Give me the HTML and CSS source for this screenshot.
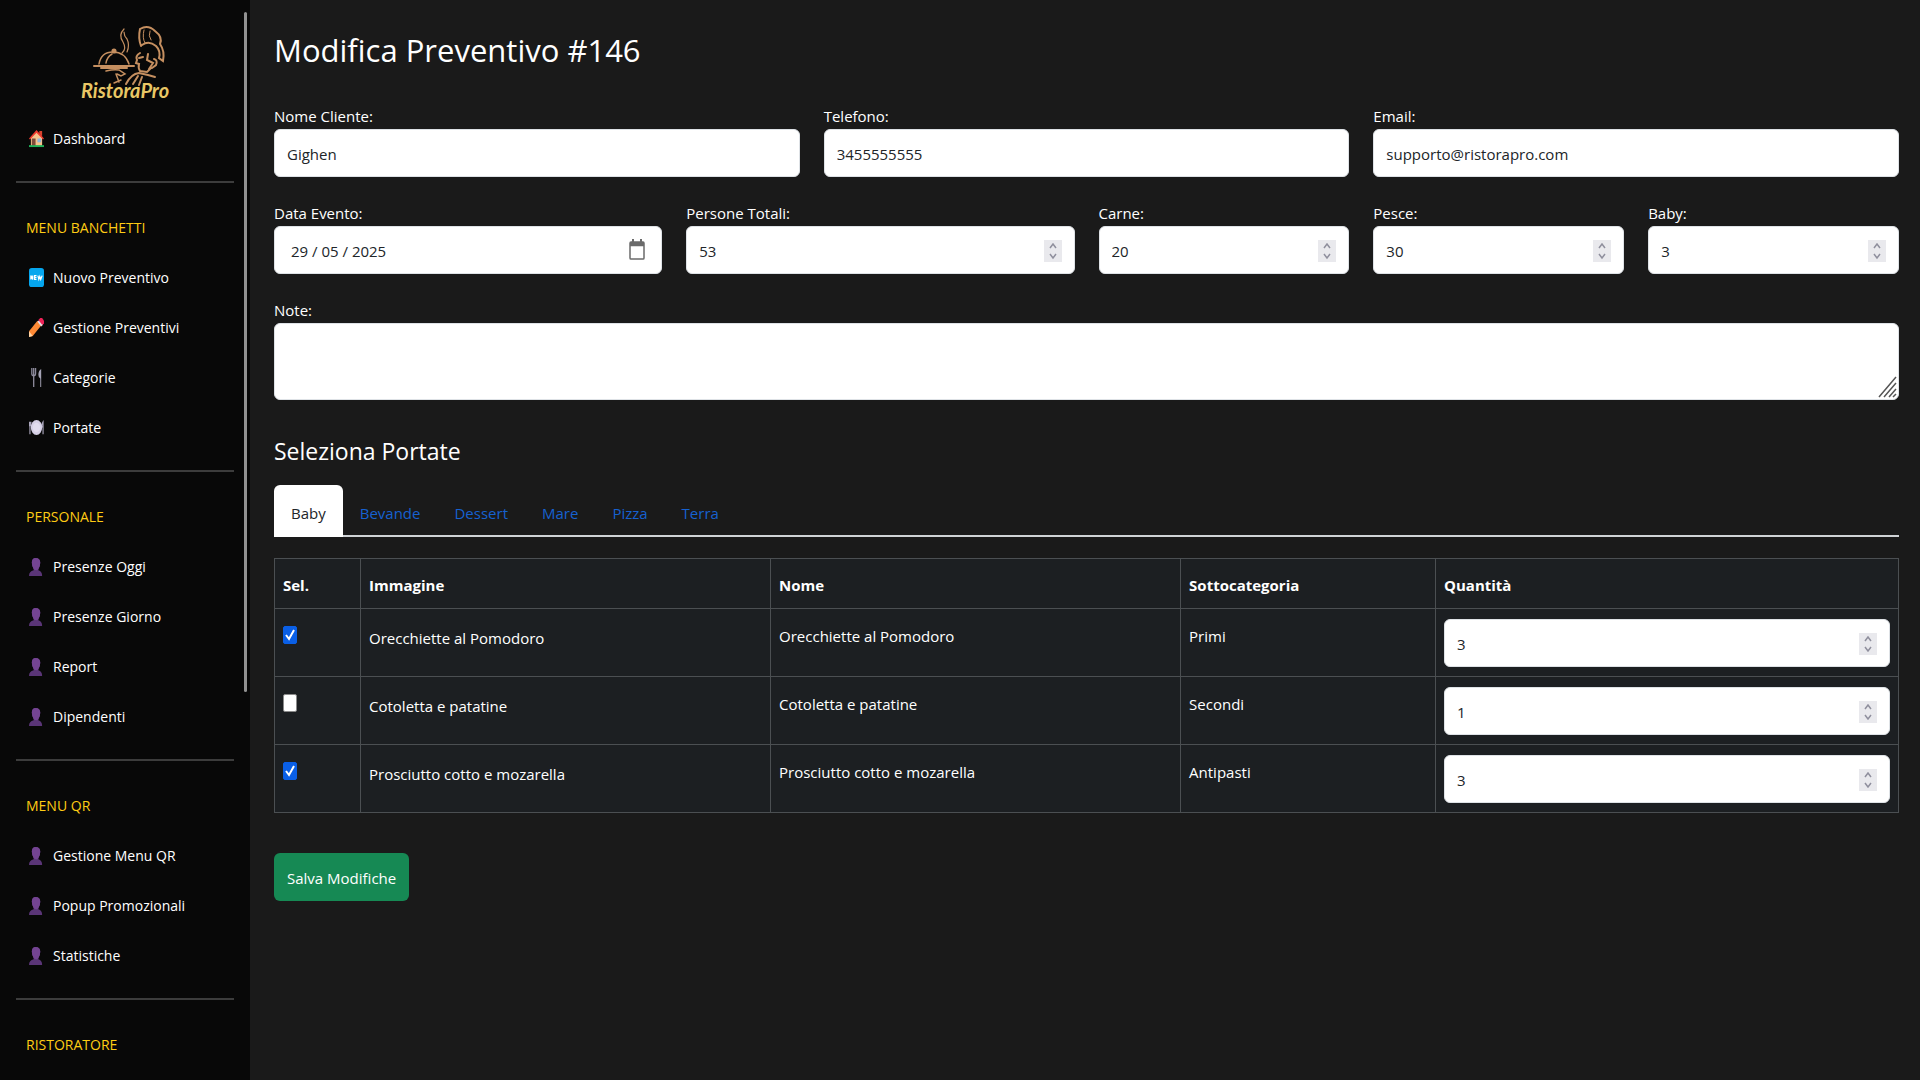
FILE: index.html
```html
<!DOCTYPE html>
<html lang="it">
  <head>
    <meta charset="UTF-8" />
    <meta name="viewport" content="width=device-width, initial-scale=1.0" />
    <title>Modifica Preventivo #146</title>
    <link rel="stylesheet" href="styles.css">
  </head>
  <body>
    <svg class="sprite" aria-hidden="true">
      <symbol id="i-home" viewBox="0 0 16 20" preserveAspectRatio="none">
        <path d="M2 9 8 3l6 6v9H2z" fill="#f6c28b" />
        <path d="M11 2h3v6l-3-3z" fill="#d8432e" />
        <path d="M8 1 0 10l1 1 7-7 7 7 1-1z" fill="#f03a2e" />
        <path d="M3 10h4v8H3z" fill="#7c4a3a" />
        <path d="M9 10h4v4H9z" fill="#8fb6d8" />
        <path d="M0 17h16v2H0z" fill="#1fb25a" />
      </symbol>
      <symbol id="i-new" viewBox="0 0 16 20" preserveAspectRatio="none">
        <rect width="16" height="20" rx="3" fill="#05a6ee" />
        <path d="M2 12V8l2 4V8M8 8H6v4h2M6 10h2M9.500 8l1 4 1-3 1 3 1.500-4" fill="none" stroke="#fff" stroke-width="1.300" />
      </symbol>
      <symbol id="i-pencil" viewBox="0 0 16 20" preserveAspectRatio="none">
        <path d="M0 20v-6L9 3l4 5L4 19z" fill="#ff8a35" />
        <path d="M0 20v-6l4 5z" fill="#ffd5a6" />
        <path d="m9 4 2-2 4 5-2 2z" fill="#e6dfe6" />
        <path d="m10 2 2-2h2l2 3v3l-2 1z" fill="#ee2257" />
      </symbol>
      <symbol id="i-fork" viewBox="0 0 16 20" preserveAspectRatio="none">
        <path d="M3 0v6q0 2 2 2t2-2V0M5 0v20" fill="none" stroke="#8d8b9c" stroke-width="1.400" />
        <path d="M13 20V1q-3 2-3 6 0 3 2 4v9z" fill="#a5a3b5" />
      </symbol>
      <symbol id="i-plate" viewBox="0 0 16 20" preserveAspectRatio="none">
        <path d="M1 4v13M0 4v4h2V4M15 17V4q-2 3-1 6" fill="none" stroke="#a9a5bb" stroke-width="1.200" />
        <ellipse cx="8" cy="10" rx="6" ry="8" fill="#d6d0e6" />
        <ellipse cx="8" cy="10" rx="4" ry="5" fill="#e2ddef" />
      </symbol>
      <symbol id="i-user" viewBox="0 0 16 20" preserveAspectRatio="none">
        <path d="M0 20q0-5 5-6v-2Q3 9 3 6q0-5 4-5 5 0 5 5 0 4-2 6v2q4 1 4 6z" fill="#5a3577" />
        <path d="M5 13Q3 9 3 6q0-5 4-5 5 0 5 5 0 4-2 7-2 2-5 0z" fill="#744492" />
      </symbol>
    </svg>

    <div class="layout">
      <aside class="sidebar">
        <a class="brand" href="#">
          <svg class="brand__logo" viewBox="76 22 98 84" role="img" aria-label="RistoraPro">
            <g fill="none" stroke="#c58f60" stroke-width="1.500" stroke-linecap="round">
              <path d="M99 64q2-12 14-12t16 12M106 63q1-6 6-9" />
              <circle cx="114" cy="51" r="1.800" fill="#c58f60" />
              <path d="M94 66h40M101 68h26" stroke-width="2" />
              <path d="M124 29q-6 6-1 13 4 7-1 11M124 32q0 4 3 7 3 6 0 13" stroke-width="1.200" />
              <path d="M141 46q-3-8-1-17 8-5 15 2 8 6 5 13 5 7 3 17l-4-3q2-7-3-12-7-6-14-1" stroke-width="2" />
              <path d="M144 30q-2 8 1 13M150 31q-2 5 1 9" stroke-width="1" />
              <path d="M140 53q-5 3-3 7l-1 3 3 1q-1 4 1 7l7 1 4-4M148 54l-1 6 6 3-4 6M154 59q4 1 2 6l-4 3M139 58l4-1" stroke-width="2" />
              <path d="M106 71q8-2 13-1l6 4-4 2-4-2M116 74l3 8M121 80l-7 3" />
              <path d="M126 84q5-10 13-11l9 2 7 2M133 84l5-8M139 85l3-8" stroke-width="2" />
            </g>
            <text class="brand__name" x="81" y="98">RistoraPro</text>
          </svg>
        </a>

        <nav>
          <ul class="menu">
            <li><a class="menu__link" href="#"><svg class="icon"><use href="#i-home" /></svg>Dashboard</a></li>
          </ul>
          <section class="menu-group">
            <h2 class="menu-group__title">MENU BANCHETTI</h2>
            <ul class="menu">
              <li><a class="menu__link" href="#"><svg class="icon"><use href="#i-new" /></svg>Nuovo Preventivo</a></li>
              <li><a class="menu__link" href="#"><svg class="icon"><use href="#i-pencil" /></svg>Gestione Preventivi</a></li>
              <li><a class="menu__link" href="#"><svg class="icon"><use href="#i-fork" /></svg>Categorie</a></li>
              <li><a class="menu__link" href="#"><svg class="icon"><use href="#i-plate" /></svg>Portate</a></li>
            </ul>
          </section>
          <section class="menu-group">
            <h2 class="menu-group__title">PERSONALE</h2>
            <ul class="menu">
              <li><a class="menu__link" href="#"><svg class="icon"><use href="#i-user" /></svg>Presenze Oggi</a></li>
              <li><a class="menu__link" href="#"><svg class="icon"><use href="#i-user" /></svg>Presenze Giorno</a></li>
              <li><a class="menu__link" href="#"><svg class="icon"><use href="#i-user" /></svg>Report</a></li>
              <li><a class="menu__link" href="#"><svg class="icon"><use href="#i-user" /></svg>Dipendenti</a></li>
            </ul>
          </section>
          <section class="menu-group">
            <h2 class="menu-group__title">MENU QR</h2>
            <ul class="menu">
              <li><a class="menu__link" href="#"><svg class="icon"><use href="#i-user" /></svg>Gestione Menu QR</a></li>
              <li><a class="menu__link" href="#"><svg class="icon"><use href="#i-user" /></svg>Popup Promozionali</a></li>
              <li><a class="menu__link" href="#"><svg class="icon"><use href="#i-user" /></svg>Statistiche</a></li>
            </ul>
          </section>
          <section class="menu-group">
            <h2 class="menu-group__title">RISTORATORE</h2>
          </section>
        </nav>
        <span class="sidebar__thumb"></span>
      </aside>

      <main class="content">
        <h1 class="title">Modifica Preventivo #146</h1>

        <form>
          <div class="fields">
            <div class="field field--4">
              <label for="nome">Nome Cliente:</label>
              <input class="control" type="text" id="nome" value="Gighen" />
            </div>
            <div class="field field--4">
              <label for="telefono">Telefono:</label>
              <input class="control" type="tel" id="telefono" value="3455555555" />
            </div>
            <div class="field field--4">
              <label for="email">Email:</label>
              <input class="control" type="email" id="email" value="supporto@ristorapro.com" />
            </div>

            <div class="field field--3">
              <label for="data">Data Evento:</label>
              <div class="date">
                <input class="control control--date" type="text" id="data" value="29 / 05 / 2025" />
                <button class="date__button" type="button" aria-label="Apri calendario">
                  <svg class="date__icon" viewBox="0 0 16 20" preserveAspectRatio="none">
                    <rect x="1" y="3" width="14" height="16" rx="1" fill="none" stroke="#6b6b6b" stroke-width="1.500" />
                    <path d="M1 3h14v4H1zM3 0h2v4H3zM11 0h2v4h-2z" fill="#6b6b6b" />
                  </svg>
                </button>
              </div>
            </div>
            <div class="field field--3">
              <label for="persone">Persone Totali:</label>
              <input class="control" type="number" id="persone" value="53" />
            </div>
            <div class="field field--2">
              <label for="carne">Carne:</label>
              <input class="control" type="number" id="carne" value="20" />
            </div>
            <div class="field field--2">
              <label for="pesce">Pesce:</label>
              <input class="control" type="number" id="pesce" value="30" />
            </div>
            <div class="field field--2">
              <label for="baby">Baby:</label>
              <input class="control" type="number" id="baby" value="3" />
            </div>

            <div class="field field--12">
              <label for="note">Note:</label>
              <textarea class="control control--area" id="note"></textarea>
            </div>
          </div>

          <h2 class="subtitle">Seleziona Portate</h2>

          <div class="tabs" role="tablist">
            <button class="tab tab--active" type="button" role="tab" aria-selected="true">Baby</button>
            <button class="tab" type="button" role="tab">Bevande</button>
            <button class="tab" type="button" role="tab">Dessert</button>
            <button class="tab" type="button" role="tab">Mare</button>
            <button class="tab" type="button" role="tab">Pizza</button>
            <button class="tab" type="button" role="tab">Terra</button>
          </div>

          <table class="dishes">
            <colgroup>
              <col class="col-sel" />
              <col class="col-name" />
              <col class="col-name" />
              <col class="col-sub" />
              <col />
            </colgroup>
            <thead>
              <tr>
                <th>Sel.</th>
                <th>Immagine</th>
                <th>Nome</th>
                <th>Sottocategoria</th>
                <th>Quantità</th>
              </tr>
            </thead>
            <tbody>
              <tr>
                <td><input class="check" type="checkbox" aria-label="Orecchiette al Pomodoro" checked /></td>
                <td class="dishes__image">Orecchiette al Pomodoro</td>
                <td>Orecchiette al Pomodoro</td>
                <td>Primi</td>
                <td><input class="control" type="number" aria-label="Quantità Orecchiette al Pomodoro" value="3" /></td>
              </tr>
              <tr>
                <td><input class="check" type="checkbox" aria-label="Cotoletta e patatine" /></td>
                <td class="dishes__image">Cotoletta e patatine</td>
                <td>Cotoletta e patatine</td>
                <td>Secondi</td>
                <td><input class="control" type="number" aria-label="Quantità Cotoletta e patatine" value="1" /></td>
              </tr>
              <tr>
                <td><input class="check" type="checkbox" aria-label="Prosciutto cotto e mozarella" checked /></td>
                <td class="dishes__image">Prosciutto cotto e mozarella</td>
                <td>Prosciutto cotto e mozarella</td>
                <td>Antipasti</td>
                <td><input class="control" type="number" aria-label="Quantità Prosciutto cotto e mozarella" value="3" /></td>
              </tr>
            </tbody>
          </table>

          <button class="save" type="submit">Salva Modifiche</button>
        </form>
      </main>
    </div>
  </body>
</html>
```

FILE: styles.css
```css
:root {
  --background: #1a1a1a;
  --sidebar: #080808;
  --panel: #1c1f22;
  --border: #4b4f52;
  --accent: #ffcc14;
  --link: #1661d0;
  --save: #168954;
}
*,
*::before,
*::after {
  box-sizing: border-box;
}
body {
  margin: 0;
  color: #fff;
  background: var(--background);
  font-family: "Open Sans", "Noto Sans", sans-serif;
  font-size: 15px;
  line-height: 25px;
}
input,
textarea,
button {
  font: inherit;
}
.sprite {
  display: none;
}
.layout {
  display: flex;
  height: 100vh;
}

/* Sidebar */
.sidebar {
  position: relative;
  flex: 0 0 250px;
  overflow: hidden;
  background: var(--sidebar);
}
.sidebar__thumb {
  position: absolute;
  top: 12px;
  right: 3px;
  width: 3px;
  height: 63%;
  border-radius: 2px;
  background: #919191;
}
.brand {
  display: flex;
  justify-content: center;
  padding: 22px 0 7px;
}
.brand__logo {
  width: 98px;
  height: 84px;
}
.brand__name {
  fill: #e9c765;
  font-family: Lato, sans-serif;
  font-size: 20px;
  font-style: italic;
  font-weight: 700;
}
.menu {
  margin: 0;
  padding: 0;
  list-style: none;
}
.menu__link {
  display: flex;
  align-items: center;
  gap: 9px;
  height: 50px;
  padding-left: 29px;
  color: #fff;
  font-size: 14px;
  text-decoration: none;
}
.icon {
  width: 15px;
  height: 19px;
}
.menu-group {
  margin: 18px 16px 0;
  border-top: 2px solid #3c3c3c;
  padding-top: 20px;
}
.menu-group__title {
  margin: 0;
  padding-left: 10px;
  color: var(--accent);
  font-size: 14px;
  font-weight: 400;
  line-height: 49px;
}
.menu-group .menu__link {
  padding-left: 13px;
}

/* Form */
.content {
  flex: 1;
  min-width: 0;
  padding: 25px 21px 26px 24px;
}
.title {
  margin: 0 0 29px;
  font-size: 31px;
  font-weight: 400;
  line-height: 50px;
}
.fields {
  display: grid;
  grid-template-columns: repeat(12, 1fr);
  gap: 24px;
}
.field {
  display: flex;
  flex-direction: column;
}
.field--2 {
  grid-column: span 2;
}
.field--3 {
  grid-column: span 3;
}
.field--4 {
  grid-column: span 4;
}
.field--12 {
  grid-column: span 12;
}
.control {
  width: 100%;
  height: 48px;
  padding: 2px 12px 0;
  border: 1px solid #dee2e6;
  border-radius: 6px;
  color: #212529;
  background: #fff;
}
.control--date {
  padding-left: 16px;
}
.control--area {
  display: block;
  height: 77px;
  padding: 8px 12px;
  background: #fff url("data:image/svg+xml,%3Csvg xmlns='http://www.w3.org/2000/svg' width='20' height='24'%3E%3Cpath d='M1 22 18 2M6 22 18 8M11 22l7-8M15 22l3-3' stroke='%23555' stroke-width='1.500'/%3E%3C/svg%3E") no-repeat right bottom;
}
.control--area::-webkit-resizer {
  background: transparent;
}
.control::-webkit-inner-spin-button {
  width: 18px;
  height: 22px;
  appearance: none;
  background: url("data:image/svg+xml,%3Csvg xmlns='http://www.w3.org/2000/svg' width='18' height='22'%3E%3Cpath fill='%23e9e9ed' d='M0 0h18v22H0z'/%3E%3Cpath d='m6 8 3-4 3 4M6 14l3 4 3-4' fill='none' stroke='%238f8f9d' stroke-width='1.500'/%3E%3C/svg%3E") no-repeat;
  opacity: 1;
}
.date {
  position: relative;
}
.date__button {
  position: absolute;
  top: 13px;
  right: 17px;
  display: flex;
  padding: 0;
  border: 0;
  background: none;
}
.date__icon {
  width: 16px;
  height: 21px;
}
.subtitle {
  margin: 33px 0 16px;
  font-size: 23px;
  font-weight: 400;
  line-height: 36px;
}

/* Tabs */
.tabs {
  display: flex;
  border-bottom: 2px solid #cfd3d6;
}
.tab {
  height: 52px;
  margin-bottom: -2px;
  padding: 4px 17px 0;
  border: 0;
  border-radius: 6px 6px 0 0;
  color: var(--link);
  background: none;
}
.tab--active {
  color: #212529;
  background: #fff;
}

/* Dishes table */
.dishes {
  width: 100%;
  margin: 21px 0 40px;
  border-collapse: collapse;
  table-layout: fixed;
  background: var(--panel);
}
.dishes th,
.dishes td {
  padding: 9px 8px;
  border: 1px solid var(--border);
  text-align: left;
  vertical-align: top;
}
.dishes th {
  height: 50px;
  padding-top: 14px;
}
.dishes td {
  padding-top: 15px;
}
.dishes .dishes__image {
  padding-top: 17px;
}
.dishes td:last-child {
  padding-top: 10px;
}
.dishes .control {
  display: block;
}
.col-sel {
  width: 86px;
}
.col-name {
  width: 25.25%;
}
.col-sub {
  width: 15.7%;
}
.check {
  display: block;
  width: 14px;
  height: 18px;
  margin: 2px 0 0;
  appearance: none;
  border: 1px solid #8a8a8a;
  border-radius: 2px;
  background: #fff;
}
.check:checked {
  border-color: #0a5fe6;
  background: #0a5fe6 url("data:image/svg+xml,%3Csvg xmlns='http://www.w3.org/2000/svg' width='12' height='16'%3E%3Cpath d='m2 8 3 4 5-9' fill='none' stroke='%23fff' stroke-width='2'/%3E%3C/svg%3E") no-repeat center;
}

.save {
  height: 48px;
  padding: 2px 13px 0;
  border: 0;
  border-radius: 6px;
  color: #fff;
  background: var(--save);
}
```
